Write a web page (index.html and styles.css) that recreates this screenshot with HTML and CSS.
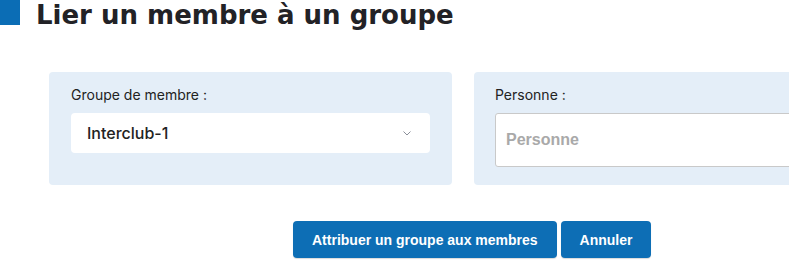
FILE: index.html
```html
<!DOCTYPE html>
<html lang="fr">
<head>
<meta charset="utf-8">
<title>Lier un membre à un groupe</title>
<link rel="stylesheet" href="styles.css">
</head>
<body>
<div class="page">
  <header class="title-bar">
    <span class="title-mark"></span>
    <h1 class="title">Lier un membre à un groupe</h1>
  </header>
  <div class="panels">
    <div class="panel">
      <label class="field-label">Groupe de membre :</label>
      <div class="select">
        <span class="select-value">Interclub-1</span>
        <svg class="chevron" width="8" height="5" viewBox="0 0 8 5"><path d="M0.5 0.5 L4 4 L7.5 0.5" fill="none" stroke="#8a8f99" stroke-width="1"/></svg>
      </div>
    </div>
    <div class="panel panel-person">
      <label class="field-label">Personne :</label>
      <input class="text-input" type="text" placeholder="Personne">
    </div>
  </div>
  <div class="actions">
    <button class="btn">Attribuer un groupe aux membres</button>
    <button class="btn">Annuler</button>
  </div>
</div>
</body>
</html>
```
FILE: styles.css
```css
html, body {
  margin: 0;
  padding: 0;
  background: #ffffff;
  overflow: hidden;
}
.page {
  width: 789px;
  height: 260px;
  overflow: hidden;
  font-family: Inter, "Open Sans", sans-serif;
}
.title-bar {
  display: flex;
  align-items: flex-start;
  gap: 16px;
  height: 30px;
}
.title-mark {
  display: block;
  width: 20px;
  height: 25px;
  background: #0b6db5;
  flex: none;
}
.title {
  margin: 0;
  font-family: "DejaVu Sans", Inter, sans-serif;
  font-size: 26px;
  line-height: 30px;
  font-weight: 700;
  color: #222226;
  white-space: nowrap;
}
.panels {
  display: grid;
  grid-template-columns: 403px 403px;
  gap: 22px;
  margin: 42px 0 0 49px;
}
.panel {
  background: #e4eef8;
  border-radius: 4px;
  height: 113px;
  box-sizing: border-box;
  padding: 14px 22px 0 22px;
}
.panel-person {
  padding-left: 21px;
}
.field-label {
  display: block;
  font-size: 14px;
  line-height: 18px;
  color: #222;
  margin-bottom: 9px;
}
.select {
  display: flex;
  align-items: center;
  justify-content: space-between;
  width: 359px;
  height: 40px;
  box-sizing: border-box;
  background: #ffffff;
  border-radius: 4px;
  padding: 0 19px 0 16px;
}
.select-value {
  font-size: 16px;
  font-weight: 500;
  color: #222;
}
.chevron {
  display: block;
}
.text-input {
  display: block;
  width: 420px;
  height: 54px;
  box-sizing: border-box;
  border: 1px solid #c9c9c9;
  border-radius: 3px;
  background: #fff;
  padding: 0 10px;
  font-family: "Liberation Sans", Arial, sans-serif;
  font-size: 16px;
  outline: none;
}
.text-input::placeholder {
  color: #a9a9a9;
  font-weight: 700;
}
.actions {
  display: flex;
  gap: 4px;
  margin: 36px 0 0 293px;
}
.btn {
  height: 37px;
  padding: 0 19px;
  border: none;
  border-radius: 4px;
  background: #0d6eb5;
  color: #ffffff;
  font-family: "Liberation Sans", Arial, sans-serif;
  font-weight: 700;
  font-size: 14px;
  box-shadow: 0 1px 1px rgba(0,0,0,0.15);
  cursor: pointer;
}
```
